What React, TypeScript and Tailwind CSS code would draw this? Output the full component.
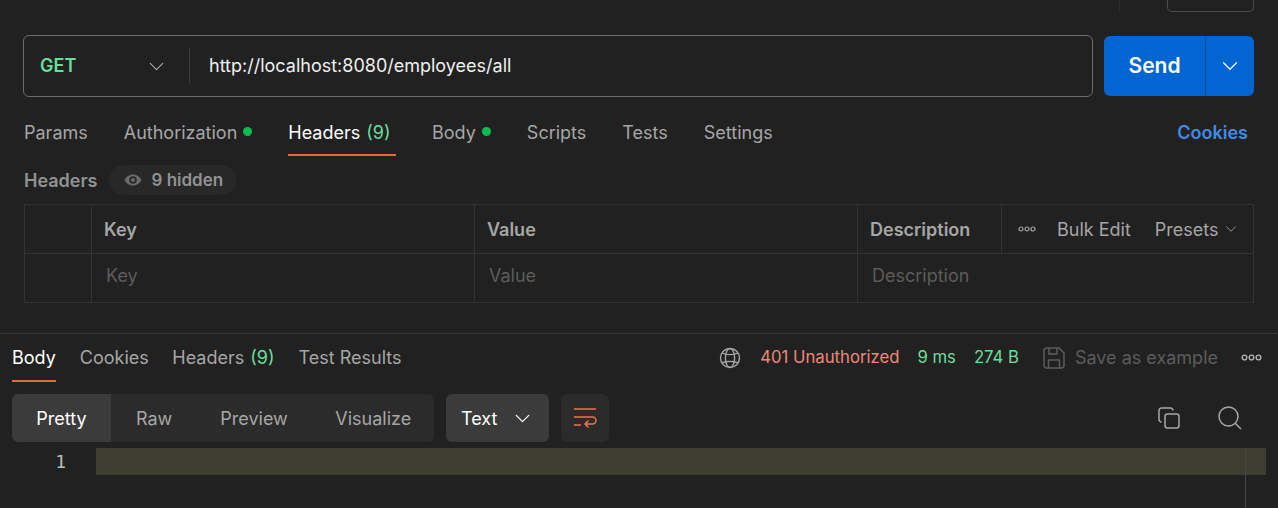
import { ChevronDown } from 'lucide-react'

function Dots({ className }: { className?: string }) {
  return (
    <svg viewBox="0 0 18 6" fill="none" stroke="currentColor" strokeWidth="1.2" className={className}>
      <circle cx="3" cy="3" r="2" />
      <circle cx="9" cy="3" r="2" />
      <circle cx="15" cy="3" r="2" />
    </svg>
  )
}

function Dot() {
  return <span className="ml-[6px] mb-[1px] w-[9px] h-[9px] rounded-full bg-[#0cbb52]" />
}

export default function App() {
  return (
    <div className="w-[1278px] h-[508px] overflow-hidden bg-[#212121] flex flex-col text-[18px] text-[#a6a6a6] font-['Inter',sans-serif]">
      {/* kante oben */}
      <div className="h-[12px] flex justify-end pr-[24px] shrink-0">
        <div className="w-px h-[12px] bg-[#2c2c2c] mr-[47px]" />
        <div className="w-[87px] h-[12px] border border-t-0 border-[#4d4d4d] rounded-b-[5px]" />
      </div>

      {/* request leiste */}
      <div className="mt-[23px] ml-[23px] mr-[24px] flex items-center gap-[11px] shrink-0">
        <div className="w-[1070px] h-[62px] border border-[#6b6b6b] rounded-[6px] flex items-center">
          <div className="w-[166px] h-[36px] pl-[16px] pr-[20px] flex items-center justify-between border-r border-[#3d3d3d]">
            <span className="font-semibold text-[#6bdd9a] pb-[1px]">GET</span>
            <ChevronDown size={25} strokeWidth={1} className="text-[#b3b3b3]" />
          </div>
          <div className="pl-[19px] pb-[1px] text-[#f0f0f0]">http://localhost:8080/employees/all</div>
        </div>
        <div className="w-[150px] h-[60px] rounded-[6px] bg-[#0265d2] flex items-center text-white">
          <div className="w-[102px] h-full flex items-center justify-center font-semibold text-[21px] border-r border-[#0a4f9e]">Send</div>
          <div className="flex-1 flex items-center justify-center">
            <ChevronDown size={26} strokeWidth={1.1} />
          </div>
        </div>
      </div>

      {/* tabs */}
      <div className="mt-[12px] h-[47px] mx-[24px] flex items-start gap-[36px] shrink-0">
        <div className="h-[47px] flex items-center pb-[1px]">Params</div>
        <div className="h-[47px] flex items-center pb-[1px]">Authorization<Dot /></div>
        <div className="h-[47px] flex items-center pt-[1px] pr-[5.5px] text-white border-b-2 border-[#e8673c]">
          Headers<span className="ml-[6px] text-[#6bdd9a]">(9)</span>
        </div>
        <div className="h-[47px] flex items-center pb-[1px]">Body<Dot /></div>
        <div className="h-[47px] flex items-center pb-[1px]">Scripts</div>
        <div className="h-[47px] flex items-center pb-[1px]">Tests</div>
        <div className="h-[47px] flex items-center pb-[1px]">Settings</div>
        <div className="h-[47px] ml-auto mr-[6px] flex items-center pb-[1px] font-semibold text-[#3f8be6]">Cookies</div>
      </div>

      {/* headers zeile */}
      <div className="mt-[9px] ml-[24px] h-[30px] flex items-center font-semibold text-[#929292] shrink-0">
        <span>Headers</span>
        <div className="ml-[11px] h-[30px] w-[127px] rounded-full bg-[#282828] flex items-center pl-[15px]">
          <svg width="18" height="12" viewBox="0 0 18 12" className="text-[#6b6b6b]">
            <path fill="currentColor" fillRule="evenodd" d="M9 0.5C5 0.5 2 3 0.5 6 2 9 5 11.5 9 11.5S16 9 17.5 6C16 3 13 0.5 9 0.5ZM9 2.2A3.8 3.8 0 1 1 9 9.8 3.8 3.8 0 1 1 9 2.2Z" />
            <circle cx="9" cy="6" r="1.9" fill="currentColor" />
          </svg>
          <span className="ml-[10px] mt-[1px] text-[17px]">9 hidden</span>
        </div>
      </div>

      {/* tabelle */}
      <div className="mt-[9px] mx-[24px] h-[99px] border border-[#343434] grid grid-cols-[67px_383px_383px_144px_1fr] grid-rows-[49px_48px] shrink-0">
        <div className="border-r border-b border-[#343434]" />
        <div className="border-r border-b border-[#343434] flex items-center pl-[12px] font-semibold text-[#a6a6a6]">Key</div>
        <div className="border-r border-b border-[#343434] flex items-center pl-[12px] font-semibold text-[#a6a6a6]">Value</div>
        <div className="border-r border-b border-[#343434] flex items-center pl-[12px] font-semibold text-[#a6a6a6]">Description</div>
        <div className="border-b border-[#343434] flex items-center pl-[16px]">
          <Dots className="w-[18px] h-[6px] text-[#a6a6a6]" />
          <span className="ml-[21px]">Bulk Edit</span>
          <span className="ml-[24px]">Presets</span>
          <ChevronDown size={18} strokeWidth={1.1} className="ml-[3px]" />
        </div>
        <div className="border-r border-[#343434]" />
        <div className="border-r border-[#343434] flex items-center pl-[14px] pb-[5px] text-[#5c5c5c]">Key</div>
        <div className="border-r border-[#343434] flex items-center pl-[14px] pb-[5px] text-[#5c5c5c]">Value</div>
        <div className="col-span-2 flex items-center pl-[14px] pb-[5px] text-[#5c5c5c]">Description</div>
      </div>

      {/* antwort */}
      <div className="mt-[30px] border-t border-[#343434] h-[49px] pl-[12px] pr-[16px] flex items-start shrink-0">
        <div className="h-[48px] flex items-center pt-[1px] text-white border-b-2 border-[#e8673c]">Body</div>
        <div className="h-[48px] ml-[24px] flex items-center pb-[1px]">Cookies</div>
        <div className="h-[48px] ml-[23.5px] flex items-center pb-[1px]">Headers<span className="ml-[6px] text-[#6bdd9a]">(9)</span></div>
        <div className="h-[48px] ml-[24px] flex items-center pb-[1px]">Test Results</div>
        <div className="ml-auto h-[48px] flex items-center pb-[1px]">
          <svg width="22" height="22" viewBox="0 0 22 22" fill="none" stroke="#a6a6a6" strokeWidth="1.4">
            <circle cx="11" cy="11" r="9.5" />
            <ellipse cx="11" cy="11" rx="4.6" ry="9.5" />
            <path d="M3 6.2C7.5 8 14.5 8 19 6.2M3 15.8C7.5 14 14.5 14 19 15.8" />
          </svg>
          <span className="ml-[19px] mt-[1px] text-[16.7px] text-[#f0887a]">401 Unauthorized</span>
          <span className="ml-[18px] mt-[1px] text-[16.7px] text-[#6bdd9a]">9 ms</span>
          <span className="ml-[18px] mt-[1px] text-[16.7px] text-[#6bdd9a]">274 B</span>
          <svg width="22" height="22" viewBox="0 0 22 22" fill="none" stroke="#5c5c5c" strokeWidth="1.5" className="ml-[24px]">
            <path d="M1 3.5A2.5 2.5 0 0 1 3.5 1H16L21 6V18.5A2.5 2.5 0 0 1 18.5 21H3.5A2.5 2.5 0 0 1 1 18.5Z" />
            <path d="M6 1V7H14V1M5.5 21V13H16.5V21" />
          </svg>
          <span className="ml-[10px] text-[#5c5c5c]">Save as example</span>
          <Dots className="ml-[23px] w-[21px] h-[7px] text-[#b3b3b3]" />
        </div>
      </div>

      {/* werkzeug leiste */}
      <div className="mt-[12px] ml-[12px] mr-[36px] h-[48px] flex items-center shrink-0">
        <div className="w-[422px] h-[48px] rounded-[6px] bg-[#2b2b2b] flex items-center overflow-hidden">
          <div className="w-[99px] h-full rounded-l-[6px] bg-[#3b3b3b] text-white flex items-center justify-center">Pretty</div>
          <div className="ml-[25px]">Raw</div>
          <div className="ml-[48px]">Preview</div>
          <div className="ml-[47.5px]">Visualize</div>
        </div>
        <div className="ml-[12px] w-[103px] h-[48px] rounded-[6px] bg-[#3b3b3b] text-white flex items-center pl-[15px]">
          Text
          <ChevronDown size={25} strokeWidth={1.2} className="ml-[13px]" />
        </div>
        <div className="ml-[12px] w-[48px] h-[48px] rounded-[6px] bg-[#2b2b2b] flex items-center justify-center">
          <svg width="24" height="22" viewBox="0 0 24 22" fill="none" stroke="#ee7445" strokeWidth="1.5">
            <path d="M1 2H23M1 10H19.5A3.5 3.5 0 0 1 19.5 17H12M15.5 13.5L12 17L15.5 20.5M1 18H8" />
          </svg>
        </div>
        <div className="ml-auto flex items-center gap-[38px]">
          <svg width="22" height="22" viewBox="0 0 22 22" fill="none" stroke="#a6a6a6" strokeWidth="1.5">
            <rect x="7" y="7" width="14" height="14" rx="2.5" />
            <path d="M3.5 15A2.5 2.5 0 0 1 1 12.5V3.5A2.5 2.5 0 0 1 3.5 1H12.5A2.5 2.5 0 0 1 15 3.5" />
          </svg>
          <svg width="24" height="24" viewBox="0 0 24 24" fill="none" stroke="#a6a6a6" strokeWidth="1.5">
            <circle cx="10.5" cy="10.5" r="9.5" />
            <path d="M17.5 17.5L23 23" />
          </svg>
        </div>
      </div>

      {/* editor */}
      <div className="relative mt-[6px] pr-[12px] flex items-start flex-1">
        <div className="w-[96px] h-[27px] pr-[30px] flex items-center justify-end text-[#b8bcbc] font-['DejaVu_Sans_Mono',monospace] text-[18px]">1</div>
        <div className="flex-1 h-[27px] bg-[#3e3e31]" />
        <div className="absolute left-[1245px] top-0 bottom-0 w-px bg-[#484848]" />
      </div>
    </div>
  )
}
